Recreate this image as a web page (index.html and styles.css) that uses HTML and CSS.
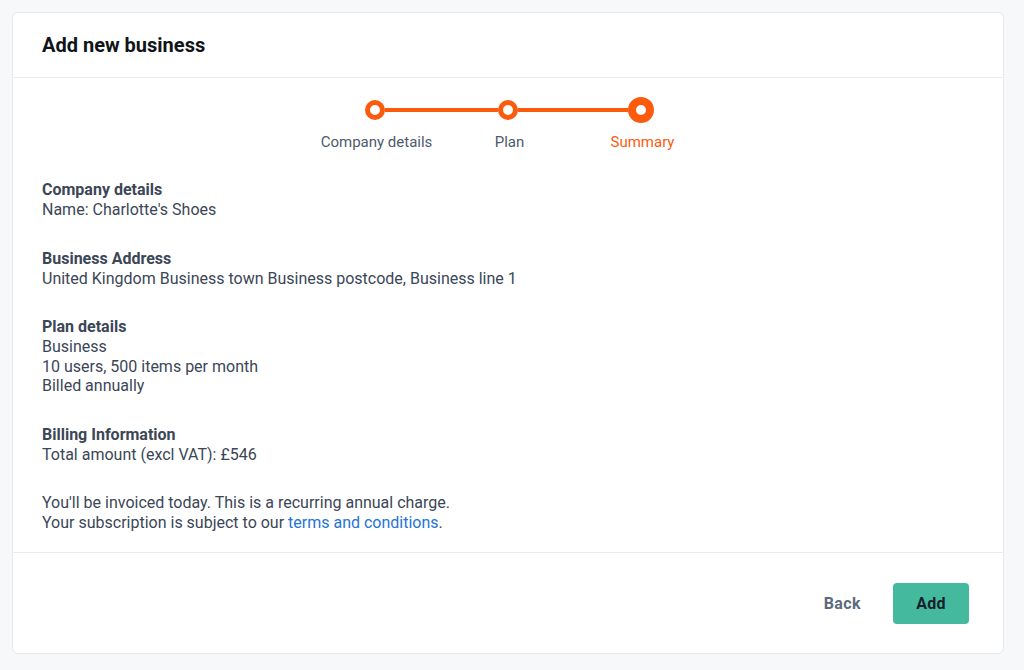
FILE: index.html
```html
<!DOCTYPE html>
<html lang="en">
<head>
<meta charset="utf-8">
<title>Add new business</title>
<link rel="stylesheet" href="styles.css">
</head>
<body>
<div class="card">
  <header class="card-header">
    <h1 class="title">Add new business</h1>
  </header>
  <main class="card-body">
    <div class="stepper">
      <div class="track">
        <span class="dot"></span>
        <span class="bar bar-1"></span>
        <span class="dot"></span>
        <span class="bar bar-2"></span>
        <span class="dot dot-active"></span>
      </div>
      <div class="labels">
        <span class="label">Company details</span>
        <span class="label">Plan</span>
        <span class="label label-active">Summary</span>
      </div>
    </div>

    <section class="section">
      <h2 class="section-title">Company details</h2>
      <p class="line">Name: Charlotte's Shoes</p>
    </section>
    <section class="section">
      <h2 class="section-title">Business Address</h2>
      <p class="line">United Kingdom Business town Business postcode, Business line 1</p>
    </section>
    <section class="section">
      <h2 class="section-title">Plan details</h2>
      <p class="line">Business</p>
      <p class="line">10 users, 500 items per month</p>
      <p class="line">Billed annually</p>
    </section>
    <section class="section">
      <h2 class="section-title">Billing Information</h2>
      <p class="line">Total amount (excl VAT): £546</p>
    </section>
    <section class="section">
      <p class="line">You'll be invoiced today. This is a recurring annual charge.</p>
      <p class="line">Your subscription is subject to our <a class="link" href="#">terms and conditions</a>.</p>
    </section>
  </main>
  <footer class="card-footer">
    <button class="btn btn-text" type="button">Back</button>
    <button class="btn btn-primary" type="button">Add</button>
  </footer>
</div>
</body>
</html>
```
FILE: styles.css
```css
* { box-sizing: border-box; }
html, body { margin: 0; padding: 0; }
body {
  background: #f7f8fa;
  font-family: Roboto, "Liberation Sans", Arial, sans-serif;
  color: #3b4657;
  padding: 12px 20px 16px 12px;
}
.card {
  width: 992px;
  height: 642px;
  background: #fff;
  border: 1px solid #e6e8ec;
  border-radius: 6px;
  display: flex;
  flex-direction: column;
}
.card-header {
  height: 65px;
  border-bottom: 1px solid #e8eaee;
  display: flex;
  align-items: center;
  padding: 0 29px;
}
.title {
  margin: 0;
  font-size: 20px;
  font-weight: 700;
  color: #111418;
}
.card-body {
  flex: 1;
  padding: 19px 29px 0;
  border-bottom: 1px solid #e8eaee;
}
.stepper {
  display: flex;
  flex-direction: column;
  align-items: center;
  margin-bottom: 29px;
}
.track {
  display: flex;
  align-items: center;
  height: 26px;
  margin-left: 3px;
}
.dot {
  width: 20px;
  height: 20px;
  border-radius: 50%;
  border: 5px solid #fc5b0d;
  background: #fff;
  flex: none;
}
.dot-active {
  width: 26px;
  height: 26px;
  border-width: 8px;
}
.bar {
  height: 4px;
  background: #fc5b0d;
  flex: none;
}
.bar-1 { width: 113px; }
.bar-2 { width: 110px; }
.labels {
  display: grid;
  grid-template-columns: 133px 133px 133px;
  margin-top: 10px;
  margin-left: 3px;
}
.label {
  text-align: center;
  font-size: 15px;
  line-height: 18px;
  color: #4d5a6b;
  white-space: nowrap;
}
.label-active { color: #fc5b0d; }
.section { margin-bottom: 29px; }
.section:last-child { margin-bottom: 0; }
.section-title {
  margin: 0;
  font-size: 16px;
  line-height: 20px;
  font-weight: 700;
  color: #3b4657;
}
.line {
  margin: 0;
  font-size: 16px;
  line-height: 19.5px;
  color: #3b4657;
}
.link { color: #1f74d4; text-decoration: none; }
.card-footer {
  height: 100px;
  flex: none;
  display: flex;
  align-items: center;
  justify-content: flex-end;
  gap: 16px;
  padding: 0 34px 0 0;
}
.btn {
  font-family: Roboto, "Liberation Sans", Arial, sans-serif;
  font-size: 16px;
  font-weight: 700;
  border: none;
  border-radius: 4px;
  height: 41px;
  cursor: pointer;
}
.btn-text {
  background: transparent;
  color: #5b6b7e;
  padding: 0 16px;
  letter-spacing: 0.4px;
}
.btn-primary {
  background: #44b99d;
  color: #17202b;
  width: 76px;
  letter-spacing: 0.3px;
}
```
